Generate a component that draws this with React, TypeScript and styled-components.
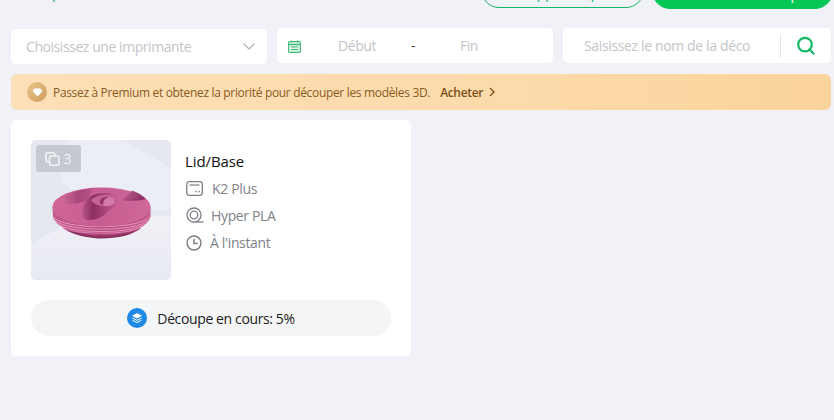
import React from "react";
import styled, { createGlobalStyle } from "styled-components";

const Global = createGlobalStyle`
  html, body { margin: 0; padding: 0; background: #f0f2f8; overflow: hidden; }
  body { font-family: "Open Sans", "Noto Sans", "Liberation Sans", sans-serif; }
  * { box-sizing: border-box; }
`;

const Page = styled.div`
  width: 834px;
  height: 420px;
  padding: 0 3px 0 11px;
  display: flex;
  flex-direction: column;
  background: #f0f2f8;
`;

const TopBar = styled.div`
  height: 9px;
  display: flex;
  justify-content: space-between;
  align-items: flex-end;
  overflow: hidden;
  margin-right: -2px;
  margin-bottom: 19px;
`;

const BackMark = styled.svg`
  margin: 0 0 7px 40px;
  flex: none;
`;

const TopActions = styled.div`
  display: flex;
  gap: 8px;
  align-items: flex-end;
`;

const TopButton = styled.div<{ $solid?: boolean }>`
  height: 36px;
  width: ${(p) => (p.$solid ? "181px" : "163px")};
  border-radius: 18px;
  display: flex;
  align-items: center;
  justify-content: ${(p) => (p.$solid ? "center" : "flex-start")};
  padding: 5px 0 0 ${(p) => (p.$solid ? "0" : "39px")};
  font-size: 14px;
  letter-spacing: -0.3px;
  white-space: nowrap;
  color: ${(p) => (p.$solid ? "#fff" : "#13b565")};
  background: ${(p) => (p.$solid ? "#06c655" : "transparent")};
  border: 1px solid ${(p) => (p.$solid ? "#06c655" : "#13b565")};
  margin-bottom: ${(p) => (p.$solid ? "0" : "1px")};
`;

const Filters = styled.div`
  display: flex;
  gap: 10px;
  height: 36px;
  margin-bottom: 10px;
`;

const Field = styled.div<{ $w: number; $offset?: boolean }>`
  width: ${(p) => p.$w}px;
  height: 35px;
  margin-top: ${(p) => (p.$offset ? "1px" : "0")};
  background: #fff;
  border-radius: 5px;
  display: flex;
  align-items: center;
  font-size: 14px;
  letter-spacing: -0.44px;
  color: #c3c5ca;
`;

const SelectText = styled.span`
  flex: 1;
  padding-left: 15px;
`;

const Chevron = styled.svg`
  margin-right: 11px;
`;

const CalendarIcon = styled.svg`
  margin: 2px 5px 0 11px;
  flex: none;
`;

const DateSlot = styled.span`
  width: 102px;
  text-align: center;
`;

const Dash = styled.span`
  width: 10px;
  text-align: center;
  color: #444;
`;

const SearchText = styled.span`
  flex: 1;
  padding-left: 21px;
  letter-spacing: -0.36px;
  white-space: nowrap;
  overflow: hidden;
`;

const SearchDivider = styled.span`
  width: 1px;
  height: 24px;
  background: #e6e7ea;
  margin-right: 15px;
`;

const SearchIcon = styled.svg`
  margin-right: 16px;
  flex: none;
`;

const Banner = styled.div`
  height: 36px;
  border-radius: 6px;
  background: linear-gradient(90deg, #fde0b8 0%, #fcdaaa 60%, #fbd49c 100%);
  display: flex;
  align-items: center;
  padding-left: 16px;
  font-size: 12px;
  letter-spacing: -0.33px;
  color: #8a5a1e;
  margin-bottom: 10px;
`;

const BannerBadge = styled.span`
  width: 20px;
  height: 20px;
  border-radius: 50%;
  background: linear-gradient(135deg, #e9c48c, #cf9d5c);
  display: flex;
  align-items: center;
  justify-content: center;
  margin-right: 6px;
`;

const BuyLink = styled.span`
  font-weight: 600;
  color: #7b4f16;
  margin-left: 10px;
  display: inline-flex;
  align-items: center;
  gap: 6px;
`;

const Card = styled.div`
  width: 400px;
  height: 236px;
  background: #fff;
  border-radius: 6px;
  padding: 20px;
  display: flex;
  flex-direction: column;
`;

const CardBody = styled.div`
  display: flex;
  gap: 14px;
  margin-bottom: 20px;
`;

const Thumb = styled.div`
  position: relative;
  width: 140px;
  height: 140px;
  border-radius: 5px;
  overflow: hidden;
  background: #e6e8f0;
`;

const CountBadge = styled.div`
  position: absolute;
  top: 5px;
  left: 5px;
  width: 45px;
  height: 27px;
  border-radius: 3px;
  background: #c6c9d0;
  color: #f2f3f6;
  font-size: 14px;
  display: flex;
  align-items: center;
  justify-content: center;
  gap: 3px;
`;

const Info = styled.div`
  display: flex;
  flex-direction: column;
  padding-top: 9px;
`;

const Title = styled.div`
  font-size: 15px;
  letter-spacing: -0.1px;
  line-height: 24px;
  height: 26px;
  color: #111;
`;

const Meta = styled.div`
  display: flex;
  align-items: center;
  height: 27px;
  padding-left: 1px;
  font-size: 14px;
  letter-spacing: -0.35px;
  color: #808389;
`;

const MetaIcon = styled.svg<{ $gap: number }>`
  margin-right: ${(p) => p.$gap}px;
  flex: none;
`;

const Pill = styled.div`
  height: 36px;
  width: 360px;
  border-radius: 18px;
  background: #f3f5f7;
  display: flex;
  align-items: center;
  justify-content: center;
  gap: 10px;
  font-size: 14px;
  letter-spacing: -0.38px;
  color: #1c1c1c;
`;

const PillIcon = styled.span`
  width: 20px;
  height: 20px;
  border-radius: 50%;
  background: #1f88e5;
  display: flex;
  align-items: center;
  justify-content: center;
`;

const ModelRender = () => (
  <svg width="140" height="140" viewBox="0 0 140 140">
    <defs>
      <linearGradient id="bg" x1="0" x2="0" y1="0" y2="1">
        <stop offset="0" stopColor="#f0f1f7" />
        <stop offset="1" stopColor="#e8eaf1" />
      </linearGradient>
      <linearGradient id="top" x1="0" x2="1" y1="0" y2="0">
        <stop offset="0" stopColor="#cf6697" />
        <stop offset="0.5" stopColor="#c75d90" />
        <stop offset="1" stopColor="#d0689a" />
      </linearGradient>
      <linearGradient id="side" x1="0" x2="1" y1="0" y2="0">
        <stop offset="0" stopColor="#c05a8b" />
        <stop offset="0.5" stopColor="#b34a7e" />
        <stop offset="1" stopColor="#c25c8c" />
      </linearGradient>
      <linearGradient id="well" x1="0" x2="1" y1="0" y2="0">
        <stop offset="0" stopColor="#cf6e9f" />
        <stop offset="0.55" stopColor="#a8467a" />
        <stop offset="1" stopColor="#b9558a" />
      </linearGradient>
      <linearGradient id="block" x1="0" x2="1" y1="0" y2="0">
        <stop offset="0" stopColor="#b9568a" />
        <stop offset="0.3" stopColor="#8c2e60" />
        <stop offset="0.6" stopColor="#a64379" />
        <stop offset="1" stopColor="#cb6698" />
      </linearGradient>
      <linearGradient id="wedge" x1="0" x2="1" y1="0" y2="0.4">
        <stop offset="0" stopColor="#c7659a" />
        <stop offset="1" stopColor="#8a2f61" />
      </linearGradient>
      <filter id="soft" x="-10%" y="-10%" width="120%" height="120%">
        <feGaussianBlur stdDeviation="0.55" />
      </filter>
    </defs>
    <polygon points="35,0 92,0 140,28 140,70 60,72 30,40" fill="#eceef5" />
    <polygon points="0,104 50,76 140,76 140,140 0,140" fill="url(#bg)" />
    <g filter="url(#soft)">
      <path d="M32 88 C42 96 60 98.5 72 98.5 C86 98.5 102 95 110 88 Z" fill="#8c3161" />
      <path d="M21.5 67 L22 77 C26 90 52 95.5 71 95.5 C92 95.5 115 90 119.5 77 L119.5 67 Z" fill="url(#side)" />
      <path d="M22.5 77 C32 90 108 90 118.5 77" fill="none" stroke="#ee9cc2" strokeWidth="0.9" />
      <path d="M24 80.5 C36 92 106 92 117 80.5" fill="none" stroke="#ee9cc2" strokeWidth="0.9" />
      <path d="M27 84 C40 94 102 94 114 84" fill="none" stroke="#ee9cc2" strokeWidth="0.9" />
      <path d="M31 87.5 C44 95 98 95 110 87.5" fill="none" stroke="#e88db6" strokeWidth="0.8" />
      <ellipse cx="70.5" cy="67" rx="49" ry="19.5" fill="url(#top)" />
      <path d="M29 61 C36 53 50 49 62 48.5 C60 52 59 54 58 58 C56 61 50 63 44 63.5 C38 64 33 63 29 61 Z" fill="url(#well)" />
      <path d="M58 58 C62 54 68 53 74 53 C84 53 88 56 88 60 C86 66 82 68 78 70 C74 76 66 80 58 80 C54 80 52 78 51 74 C51 68 53 62 58 58Z" fill="url(#block)" />
      <path d="M60 60 C64 56 70 55 75 55 C83 55 86 57 85 60 C83 64 79 66 74 66 C68 66 62 64 60 60Z" fill="#c76295" />
      <ellipse cx="76" cy="61.5" rx="7.5" ry="4.5" fill="#d47aa8" />
      <path d="M68.5 61.5 C69 57.5 74 56.5 78 57.2 C74 58 71.5 61 72.5 65 C70 64.5 68.5 63 68.5 61.5Z" fill="#93356a" />
      <path d="M91 60 C95 57 97 54 101 50.5 C106 52 111 55 115 59 C108 61 98 61.5 91 60Z" fill="url(#wedge)" />
    </g>
  </svg>
);

export default function App() {
  return (
    <Page>
      <Global />
      <TopBar>
        <BackMark width="6" height="2" viewBox="0 0 6 2"><path d="M2 0 L4 2" stroke="#5fb8a0" strokeWidth="1.4" /></BackMark>
        <TopActions>
          <TopButton>Supprimer par lot</TopButton>
          <TopButton $solid>Lancer une découpe</TopButton>
        </TopActions>
      </TopBar>

      <Filters>
        <Field $w={256} $offset>
          <SelectText>Choisissez une imprimante</SelectText>
          <Chevron width="14" height="9" viewBox="0 0 14 9"><path d="M1.5 1.5 L7 7 L12.5 1.5" fill="none" stroke="#b8bbc1" strokeWidth="1.5" /></Chevron>
        </Field>
        <Field $w={276}>
          <CalendarIcon width="13" height="13" viewBox="0 0 13 13">
            <rect x="0.6" y="1.6" width="11.8" height="10.8" rx="1" fill="#e4f6ec" stroke="#3dbb78" strokeWidth="1.1" />
            <path d="M0.6 4.5h11.8" stroke="#3dbb78" strokeWidth="1.4" />
            <path d="M3.5 0.5v2M9.5 0.5v2M3 7h7M3 9.5h7" stroke="#3dbb78" strokeWidth="1" />
          </CalendarIcon>
          <DateSlot>Début</DateSlot>
          <Dash>-</Dash>
          <DateSlot>Fin</DateSlot>
        </Field>
        <Field $w={268}>
          <SearchText>Saisissez le nom de la déco</SearchText>
          <SearchDivider />
          <SearchIcon width="19" height="19" viewBox="0 0 19 19">
            <circle cx="9" cy="8.6" r="6.8" fill="none" stroke="#12b865" strokeWidth="2.2" />
            <path d="M13.5 13.5 L17.5 17.5" stroke="#12b865" strokeWidth="2.2" strokeLinecap="round" />
          </SearchIcon>
        </Field>
      </Filters>

      <Banner>
        <BannerBadge>
          <svg width="11" height="9" viewBox="0 0 12 10"><path d="M2.5 0.5 H9.5 L11.5 3.5 L6 9.5 L0.5 3.5Z" fill="#fff" /></svg>
        </BannerBadge>
        Passez à Premium et obtenez la priorité pour découper les modèles 3D.
        <BuyLink>
          Acheter
          <svg width="6" height="10" viewBox="0 0 6 10"><path d="M1 1 L5 5 L1 9" fill="none" stroke="#7b4f16" strokeWidth="1.3" /></svg>
        </BuyLink>
      </Banner>

      <Card>
        <CardBody>
          <Thumb>
            <ModelRender />
            <CountBadge>
              <svg width="15" height="14" viewBox="0 0 15 14">
                <rect x="0.8" y="0.8" width="9" height="9" rx="2" fill="none" stroke="#f2f3f6" strokeWidth="1.6" />
                <rect x="4.5" y="4" width="9.5" height="9.2" rx="2" fill="#c6c9d0" stroke="#f2f3f6" strokeWidth="1.6" />
              </svg>
              3
            </CountBadge>
          </Thumb>
          <Info>
            <Title>Lid/Base</Title>
            <Meta>
              <MetaIcon $gap={9} width="17" height="15" viewBox="0 0 17 15">
                <rect x="0.7" y="0.7" width="15.6" height="13.6" rx="2.5" fill="none" stroke="#7d8087" strokeWidth="1.3" />
                <path d="M3.5 4h10" stroke="#7d8087" strokeWidth="1.2" />
                <path d="M9.5 10.5h1.4M12.5 10.5h1.4" stroke="#7d8087" strokeWidth="1.6" />
              </MetaIcon>
              K2 Plus
            </Meta>
            <Meta>
              <MetaIcon $gap={7} width="18" height="18" viewBox="0 0 18 18">
                <circle cx="8" cy="8" r="7" fill="none" stroke="#7d8087" strokeWidth="1.3" />
                <circle cx="8" cy="8" r="3.8" fill="none" stroke="#7d8087" strokeWidth="1.3" />
                <path d="M9.5 15 H17.5" stroke="#7d8087" strokeWidth="1.3" />
              </MetaIcon>
              Hyper PLA
            </Meta>
            <Meta>
              <MetaIcon $gap={8} width="16" height="16" viewBox="0 0 17 17">
                <circle cx="8.5" cy="8.5" r="7.4" fill="none" stroke="#7d8087" strokeWidth="1.6" />
                <path d="M8.5 4 V9 H12.5" fill="none" stroke="#7d8087" strokeWidth="1.6" />
              </MetaIcon>
              À l'instant
            </Meta>
          </Info>
        </CardBody>
        <Pill>
          <PillIcon>
            <svg width="12" height="12" viewBox="0 0 12 12">
              <path d="M6 1 L11 3.7 L6 6.4 L1 3.7Z" fill="#fff" />
              <path d="M1.5 6 L6 8.4 L10.5 6M1.5 8.2 L6 10.6 L10.5 8.2" fill="none" stroke="#fff" strokeWidth="1" />
            </svg>
          </PillIcon>
          Découpe en cours: 5%
        </Pill>
      </Card>
    </Page>
  );
}
